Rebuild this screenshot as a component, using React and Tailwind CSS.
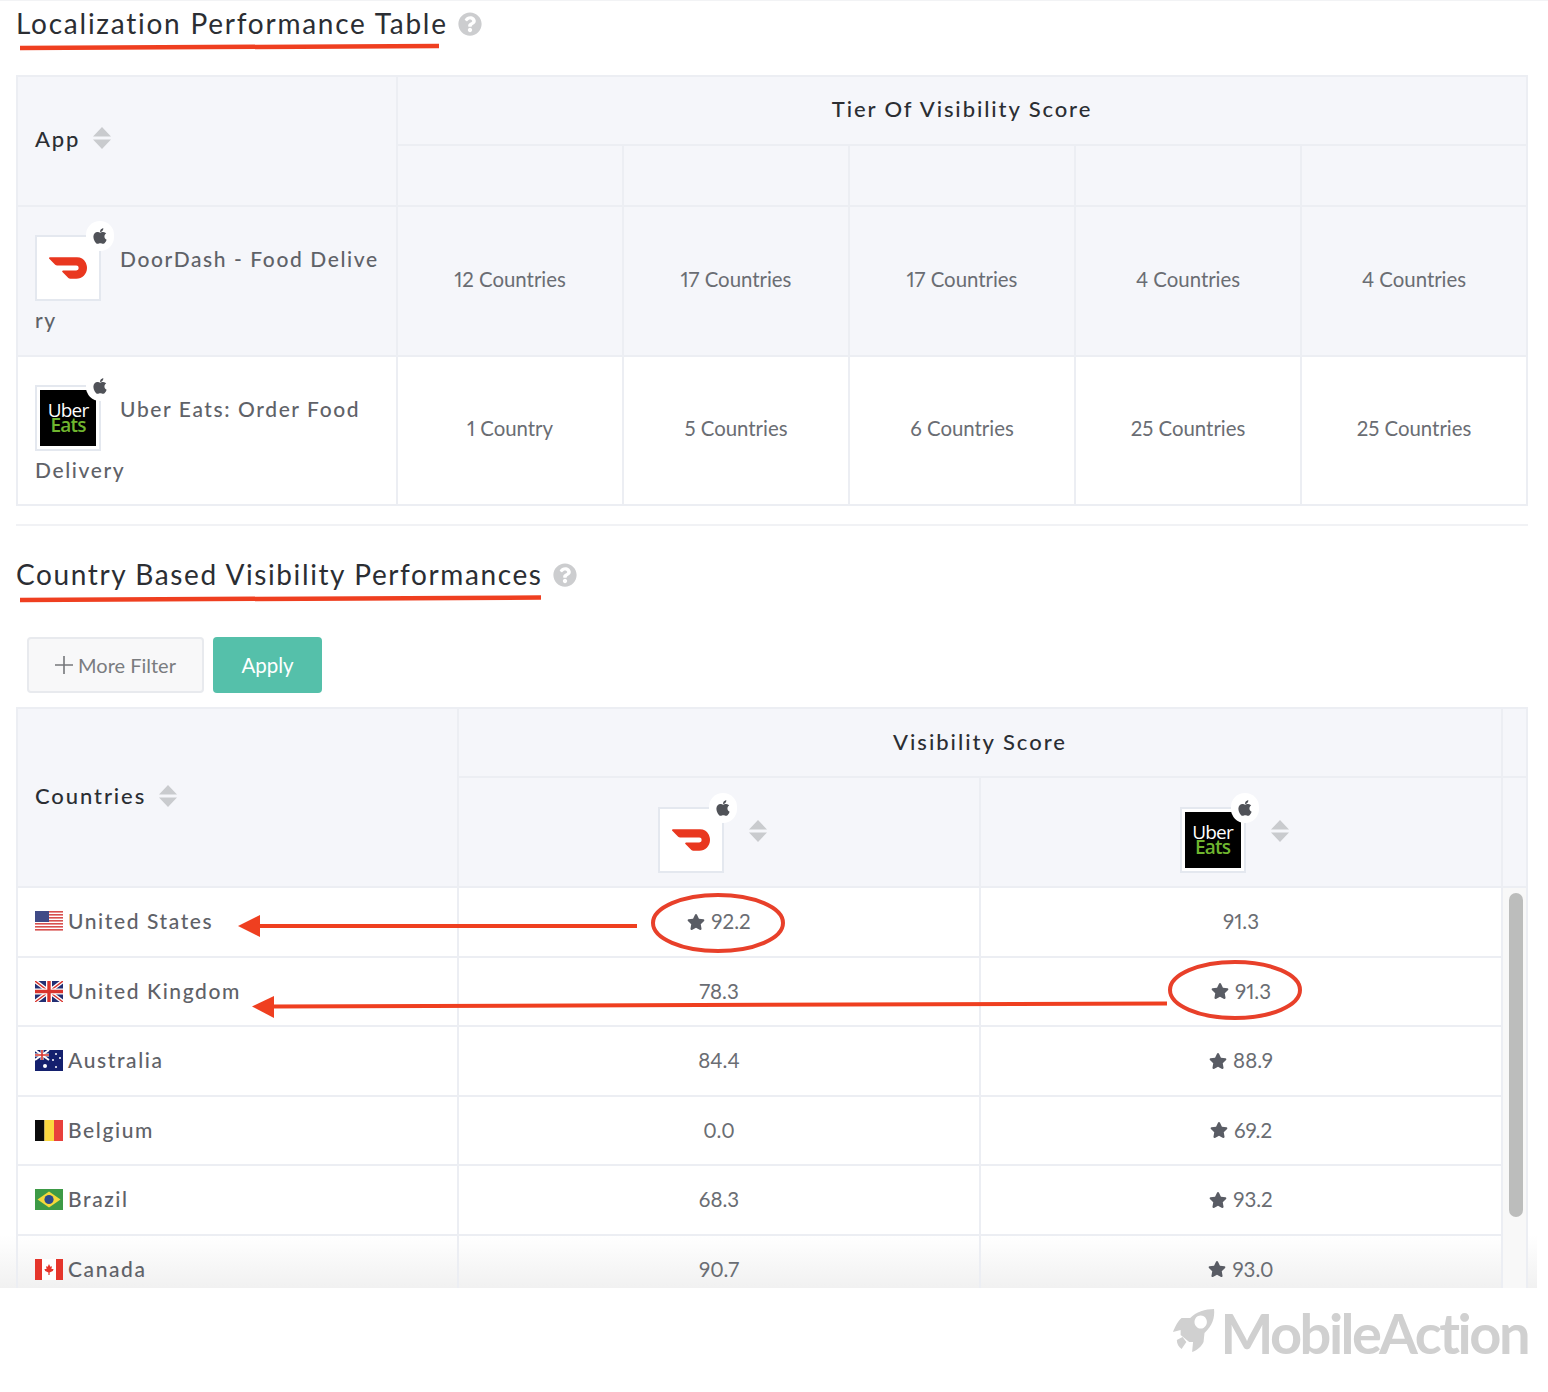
import React from "react";
import { FaApple, FaStar, FaQuestionCircle } from "react-icons/fa";

const line = "border-[#eceef3]";

function Sort({ className = "" }) {
  return (
    <svg viewBox="0 0 18 22" className={`block shrink-0 w-[18px] h-[22px] ${className}`}>
      <path d="M9 0 L18 9.5 H0 Z M0 12.5 H18 L9 22 Z" fill="#c9cbce" />
    </svg>
  );
}

function Help() {
  return <FaQuestionCircle className="inline-block w-[24px] h-[24px] text-[#cccdcf]" />;
}

function DoorDash() {
  return (
    <svg viewBox="0 0 99.5 56.5" className="w-[38px] h-[22px]">
      <path fill="#e9371f" d="M95.64,13.38A25.24,25.24,0,0,0,73.27,0H2.43A2.44,2.44,0,0,0,.72,4.16L16.15,19.68a7.26,7.26,0,0,0,5.15,2.14H71.24a6.44,6.44,0,1,1,.13,12.88H36.94a2.44,2.44,0,0,0-1.72,4.16L50.66,54.39a7.25,7.25,0,0,0,5.15,2.14H71.38c20.26,0,35.58-21.66,24.26-43.15" />
    </svg>
  );
}

function UberEats() {
  return (
    <div className="w-[56px] h-[56px] bg-black flex flex-col items-center justify-center font-['Open_Sans',sans-serif] text-[19px] tracking-[-0.8px]">
      <span className="block leading-[15px] h-[15px] text-white">Uber</span>
      <span className="block leading-[15px] h-[15px] font-semibold text-[#6fb52f]">Eats</span>
    </div>
  );
}

function AppIcon({ kind, className = "" }) {
  return (
    <span className={`relative flex shrink-0 w-[66px] h-[66px] bg-white border-2 border-[#e4e8ef] items-center justify-center ${className}`}>
      {kind === "door" ? <DoorDash /> : <UberEats />}
      <span className="absolute -top-[16px] -right-[15px] w-[28px] h-[30px] rounded-full bg-white flex items-center justify-center">
        <FaApple className="w-[18px] h-[18px] text-[#505258]" />
      </span>
    </span>
  );
}

function AppCell({ kind, first, second, bg }) {
  return (
    <div className={`${bg} border-r-2 border-b-2 ${line} h-full pl-[17px] pt-[28px] text-[21px] leading-[24px] tracking-[1.6px] font-medium text-[#5f6268] whitespace-nowrap`}>
      <AppIcon kind={kind} className="float-left mr-[19px] mb-[7px]" />
      <span className="block pt-[12px]">{first}</span>
      <span className="block clear-left">{second}</span>
    </div>
  );
}

function Title({ children, className = "", spacing }) {
  return (
    <div className={`h-[48px] flex items-center gap-[10px] ${className}`}>
      <h2 className={`text-[28px] leading-[48px] -mt-[2px] text-[#2b2e33] font-normal ${spacing}`}>{children}</h2>
      <Help />
    </div>
  );
}

function Cell({ children, bg = "" }) {
  return (
    <div className={`${bg} border-r-2 border-b-2 ${line} flex items-center justify-center pb-[4px] text-[20.4px] text-[#6a6d73]`}>
      {children}
    </div>
  );
}

const tier1 = ["12 Countries", "17 Countries", "17 Countries", "4 Countries", "4 Countries"];
const tier2 = ["1 Country", "5 Countries", "6 Countries", "25 Countries", "25 Countries"];

function Flag({ code }) {
  const cls = "w-[28px] h-[21px] shrink-0";
  if (code === "us")
    return (
      <svg viewBox="0 0 28 21" className={cls}>
        <rect width="28" height="21" fill="#fff" />
        {[0, 3, 6, 9, 12, 15, 18].map((y) => (
          <rect key={y} y={y} width="28" height="1.6" fill="#d8504e" />
        ))}
        <rect width="14" height="11" fill="#3f4a86" />
      </svg>
    );
  if (code === "uk")
    return (
      <svg viewBox="0 0 28 21" className={cls}>
        <rect width="28" height="21" fill="#232f73" />
        <path d="M0 0 L28 21 M28 0 L0 21" stroke="#fff" strokeWidth="4" />
        <path d="M0 0 L28 21 M28 0 L0 21" stroke="#d8342e" strokeWidth="1.4" />
        <path d="M14 0 V21 M0 10.5 H28" stroke="#fff" strokeWidth="6" />
        <path d="M14 0 V21 M0 10.5 H28" stroke="#d8342e" strokeWidth="3.4" />
      </svg>
    );
  if (code === "au")
    return (
      <svg viewBox="0 0 28 21" className={cls}>
        <rect width="28" height="21" fill="#14206e" />
        <path d="M0 0 L14 10 M14 0 L0 10" stroke="#fff" strokeWidth="2" />
        <path d="M7 0 V10 M0 5 H14" stroke="#fff" strokeWidth="3" />
        <path d="M7 0 V10 M0 5 H14" stroke="#d8342e" strokeWidth="1.6" />
        <g fill="#fff">
          <circle cx="10" cy="16" r="2" />
          <circle cx="21" cy="4" r="1" />
          <circle cx="25" cy="8" r="1" />
          <circle cx="18" cy="10" r="1" />
          <circle cx="21" cy="17" r="1" />
        </g>
      </svg>
    );
  if (code === "be")
    return (
      <svg viewBox="0 0 28 21" className={cls}>
        <rect width="9.5" height="21" fill="#0b0b0b" />
        <rect x="9.5" width="9.5" height="21" fill="#fbd83f" />
        <rect x="19" width="9" height="21" fill="#e8403c" />
      </svg>
    );
  if (code === "br")
    return (
      <svg viewBox="0 0 28 21" className={cls}>
        <rect width="28" height="21" fill="#3d9a46" />
        <path d="M14 2.5 L25.5 10.5 L14 18.5 L2.5 10.5 Z" fill="#f5d93a" />
        <circle cx="14" cy="10.5" r="4.6" fill="#2c4a8c" />
      </svg>
    );
  return (
    <svg viewBox="0 0 28 21" className={cls}>
      <rect width="28" height="21" fill="#fff" />
      <rect width="7" height="21" fill="#e5352b" />
      <rect x="21" width="7" height="21" fill="#e5352b" />
      <path d="M14 5 L15.3 7.8 L17 7.2 L16.4 10 L18.6 10 L17.8 12 L14.6 13.6 V16 H13.4 V13.6 L10.2 12 L9.4 10 L11.6 10 L11 7.2 L12.7 7.8 Z" fill="#e5352b" />
    </svg>
  );
}

const rows = [
  ["us", "United States", "92.2", true, "91.3", false],
  ["uk", "United Kingdom", "78.3", false, "91.3", true],
  ["au", "Australia", "84.4", false, "88.9", true],
  ["be", "Belgium", "0.0", false, "69.2", true],
  ["br", "Brazil", "68.3", false, "93.2", true],
  ["ca", "Canada", "90.7", false, "93.0", true],
];

function Score({ value, star }) {
  return (
    <div className={`border-r-2 border-b-2 ${line} h-[69.5px] flex items-center justify-center gap-[6px] text-[20.5px] text-[#6a6d73]`}>
      {star && <FaStar className="w-[18px] h-[18px] text-[#595c64]" />}
      {value}
    </div>
  );
}

function Rocket() {
  return (
    <svg viewBox="0 0 44 44" className="w-[42px] h-[44px] mt-[1px]" preserveAspectRatio="none">
      <path
        fillRule="evenodd"
        fill="#d0d0d0"
        d="M43 0 C34 0 24 3 18 9 L9 9 C5 12 2 18 0 23 L8 21 L8 26 L17 33 L21 33 L20 43 C26 41 30 37 32 33 L33 24 C41 17 44 9 43 0 Z M29 6.5 a6.5 6.5 0 1 1 -0.01 0 Z M4 31 L10 28 L14 33 L9 40 C6 38 4 35 4 31 Z"
      />
    </svg>
  );
}

export default function App() {
  return (
    <div className="relative w-[1548px] h-[1392px] overflow-hidden bg-white font-['Lato',sans-serif] proportional-nums border-t border-[#f2f3f5]">
      <div className="absolute z-0 left-0 top-[1234px] w-[1537px] h-[53px] bg-gradient-to-b from-[#ffffff] to-[#f1f1f1]" />

      <div className="relative z-10 pl-[16px] w-[1528px]">
        <Title className="pb-[2px]" spacing="tracking-[1.75px]">Localization Performance Table</Title>

        <div className={`mt-[26px] w-[1512px] border-t-2 border-l-2 ${line} grid grid-cols-[380px_repeat(5,226px)] grid-rows-[69px_61px_150px_149px]`}>
          <div className={`row-span-2 bg-[#f5f6fa] border-r-2 border-b-2 ${line} flex items-center gap-[13px] pl-[17px] pb-[6px] text-[22px] tracking-[1.9px] font-medium text-[#2b2e33]`}>
            App <Sort />
          </div>
          <div className={`col-span-5 bg-[#f5f6fa] border-r-2 border-b-2 ${line} flex items-center justify-center pb-[4px] text-[22px] tracking-[1.9px] font-medium text-[#2b2e33]`}>
            Tier Of Visibility Score
          </div>
          {[0, 1, 2, 3, 4].map((i) => (
            <Cell key={i} bg="bg-[#f5f6fa]" />
          ))}
          <AppCell kind="door" first="DoorDash - Food Delive" second="ry" bg="bg-[#f5f6fa]" />
          {tier1.map((t, i) => (
            <Cell key={i} bg="bg-[#f5f6fa]">{t}</Cell>
          ))}
          <AppCell kind="uber" first="Uber Eats: Order Food" second="Delivery" bg="bg-white" />
          {tier2.map((t, i) => (
            <Cell key={i}>{t}</Cell>
          ))}
        </div>

        <div className="mt-[18px] w-[1512px] h-[2px] bg-[#f1f2f5]" />

        <div className="mt-[25px]">
          <Title spacing="tracking-[1.6px]">Country Based Visibility Performances</Title>
        </div>

        <div className="mt-[38px] pl-[11px] flex gap-[9px]">
          <button className="w-[177px] h-[56px] rounded-[4px] border-2 border-[#e8eaee] bg-[#f8f8f9] flex items-center justify-center gap-[5px] text-[20px] text-[#7a7c80]">
            <svg viewBox="0 0 18 18" className="w-[18px] h-[18px]">
              <path d="M9 0 V18 M0 9 H18" stroke="#75777b" strokeWidth="1.6" />
            </svg>
            More Filter
          </button>
          <button className="w-[109px] h-[56px] rounded-[4px] bg-[#55c0aa] text-white text-[20.5px]">Apply</button>
        </div>

        <div className={`mt-[14px] w-[1512px] h-[581px] overflow-hidden border-t-2 border-l-2 ${line}`}>
          <div className="grid grid-cols-[441px_522px_522px_25px] grid-rows-[69px_110px]">
            <div className={`row-span-2 bg-[#f5f6fa] border-r-2 border-b-2 ${line} flex items-center gap-[13px] pl-[17px] pb-[4px] text-[22px] tracking-[1.9px] font-medium text-[#2b2e33]`}>
              Countries <Sort />
            </div>
            <div className={`col-span-2 bg-[#f5f6fa] border-r-2 border-b-2 ${line} flex items-center justify-center pb-[2px] text-[22px] tracking-[2px] font-medium text-[#2b2e33]`}>
              Visibility Score
            </div>
            <div className={`bg-[#f5f6fa] border-r-2 border-b-2 ${line}`} />
            <div className={`bg-[#f5f6fa] border-r-2 border-b-2 ${line} flex items-start justify-center gap-[25px] pt-[29px] pr-[14px]`}>
              <AppIcon kind="door" />
              <Sort className="mt-[13px]" />
            </div>
            <div className={`bg-[#f5f6fa] border-r-2 border-b-2 ${line} flex items-start justify-center gap-[25px] pt-[29px] pr-[14px]`}>
              <AppIcon kind="uber" />
              <Sort className="mt-[13px]" />
            </div>
            <div className={`bg-[#f5f6fa] border-r-2 border-b-2 ${line}`} />
          </div>

          <div className="flex items-start">
            <div className="grid grid-cols-[441px_522px_522px]">
              {rows.map(([code, name, a, sa, b, sb]) => (
                <React.Fragment key={code}>
                  <div className={`border-r-2 border-b-2 ${line} h-[69.5px] flex items-center gap-[5px] pl-[17px] text-[21px] tracking-[1.6px] font-medium text-[#5f6268]`}>
                    <Flag code={code} />
                    <span className="-mt-[2px]">{name}</span>
                  </div>
                  <Score value={a} star={sa} />
                  <Score value={b} star={sb} />
                </React.Fragment>
              ))}
            </div>
            <div className={`w-[25px] h-[420px] bg-[#f8f8f8] border-r-2 ${line} pt-[5px] pl-[6px]`}>
              <div className="w-[14px] h-[324px] rounded-full bg-[#bcbdbc]" />
            </div>
          </div>
        </div>
      </div>

      <div className="flex justify-end items-start pr-[20px] pt-[20px] gap-[5px]">
        <Rocket />
        <span className="text-[56px] leading-[50px] font-bold tracking-[-2.5px] text-[#d0d0d0]">MobileAction</span>
      </div>

      <svg className="absolute z-20 left-0 -top-px w-[1548px] h-[1392px] pointer-events-none" viewBox="0 0 1548 1392" fill="none">
        <path d="M20 48 L439 46" stroke="#ef3f20" strokeWidth="4.5" />
        <path d="M20 600 L541 597.5" stroke="#ef3f20" strokeWidth="4.5" />
        <ellipse cx="718" cy="923" rx="65" ry="28" stroke="#e8402a" strokeWidth="4" />
        <ellipse cx="1235" cy="990" rx="65" ry="28" stroke="#e8402a" strokeWidth="4" />
        <path d="M258 926 H637" stroke="#ef3f20" strokeWidth="4" />
        <path d="M238 926 L260 915 V937 Z" fill="#ef3f20" />
        <path d="M272 1006.5 L1167 1003.5" stroke="#ef3f20" strokeWidth="4" />
        <path d="M252 1006.5 L274 996 V1018 Z" fill="#ef3f20" />
      </svg>
    </div>
  );
}
